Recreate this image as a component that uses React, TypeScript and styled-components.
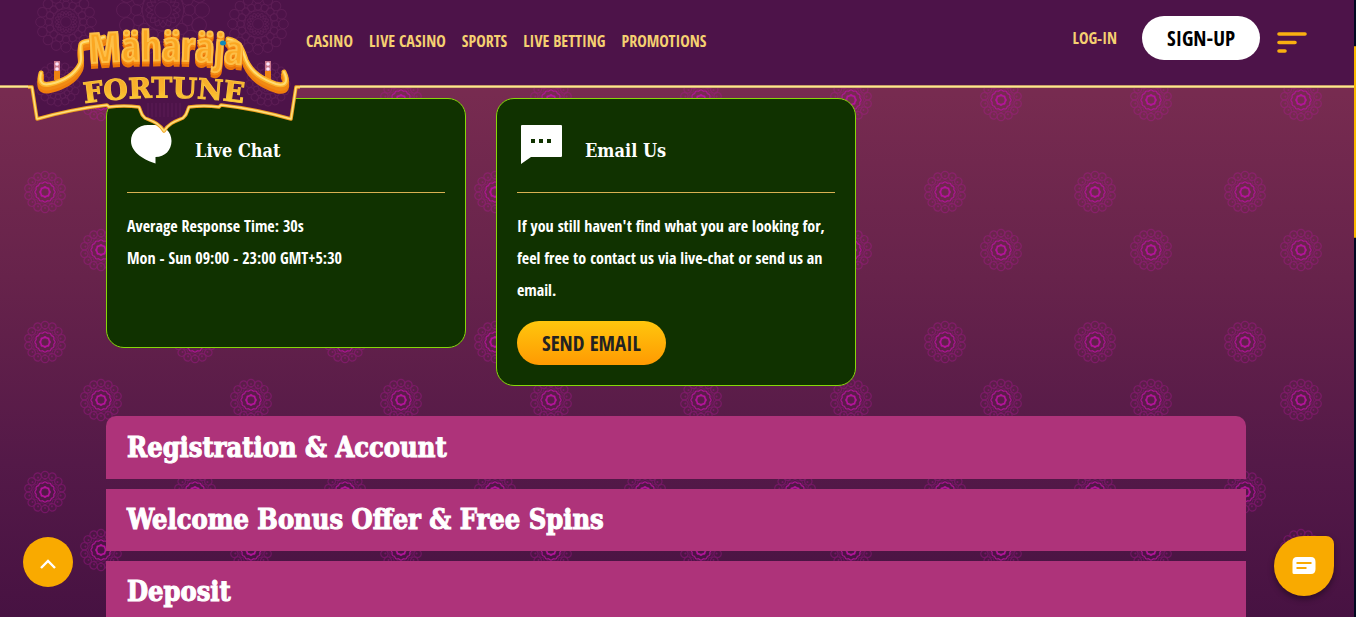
import React, { useState } from "react";
import styled, { createGlobalStyle } from "styled-components";

const narrow = `"Open Sans Condensed", "Liberation Sans Narrow", "Roboto Condensed", "Liberation Sans", sans-serif`;
const slab = `"DejaVu Serif Condensed", "DejaVu Serif", serif`;

const GlobalStyle = createGlobalStyle`
  * { box-sizing: border-box; }
  html, body, #root { height: 100%; }
  body { margin: 0; background: #4a1343; color: #fff; font-family: ${narrow}; }
`;

const Shell = styled.div`
  position: relative;
  display: flex;
  height: 100vh;
  overflow: hidden;
  background: linear-gradient(180deg, #7e2f51 0%, #772b50 15%, #67234b 45%, #541948 75%, #471242 100%);
`;

const Backdrop = styled.svg`
  position: absolute;
  inset: 0;
  width: 100%;
  height: 100%;
`;

const Scroller = styled.div`
  position: relative;
  flex: 1;
  min-width: 0;
  overflow-y: auto;
  scrollbar-width: none;
`;

const Rail = styled.div`
  position: relative;
  width: 2px;
  padding-top: 46px;
  background: #020922;
`;

const RailThumb = styled.div`
  height: 192px;
  border-radius: 1px;
  background: #f9b800;
`;

const Header = styled.header`
  position: sticky;
  top: 0;
  z-index: 5;
  display: flex;
  align-items: flex-start;
  height: 88px;
  background: linear-gradient(180deg, #4d1349 85px, #c79a6c 85px, #c79a6c 86px, #fbe88c 86px, #fbe88c 87px, #d8b878 87px);
`;

const LogoLink = styled.a`
  flex: none;
  width: 306px;
`;

const LogoArt = styled.svg`
  display: block;
  width: 306px;
  height: 140px;
`;

const LogoScript = styled.text`
  font: 700 41px ${narrow};
  fill: #fba722;
  stroke: #fdbf48;
  stroke-width: 2px;
  filter: drop-shadow(0 2px 0 #f58a12) drop-shadow(0 3px 0 #e9730a);
`;

const LogoSlab = styled.text`
  font: 700 28px "DejaVu Serif", serif;
  fill: url(#gold);
  stroke: #fbc33a;
  stroke-width: 1px;
`;

const Nav = styled.nav`
  display: flex;
  flex: 1;
  gap: 16px;
  height: 82px;
  align-items: center;
`;

const NavLink = styled.a`
  color: #f5d071;
  font-size: 16px;
  font-weight: 700;
  line-height: 24px;
  text-decoration: none;
  white-space: nowrap;
`;

const Account = styled.div`
  display: flex;
  align-items: center;
  height: 76px;
  padding-right: 47px;
`;

const SignUp = styled.button`
  height: 44px;
  margin: 0 17px 0 25px;
  padding: 0 25px;
  border: 0;
  border-radius: 22px;
  background: #fff;
  color: #000;
  font: 500 21px/44px ${narrow};
`;

const MenuButton = styled.button`
  display: flex;
  padding: 8px 0 0;
  border: 0;
  background: none;
`;

const Content = styled.div`
  padding: 10px 2px 30px 0;
`;

const Main = styled.main`
  max-width: 1140px;
  margin: 0 auto;
`;

const Cards = styled.div`
  display: flex;
  flex-wrap: wrap;
  align-items: flex-start;
  gap: 30px;
  margin-bottom: 30px;
`;

const Card = styled.section`
  width: 360px;
  min-height: 250px;
  padding: 20px;
  border: 1px solid #86d70a;
  border-radius: 18px;
  background: #103200;
`;

const CardHead = styled.header`
  display: flex;
  align-items: flex-start;
  gap: 20px;
  height: 74px;
  border-bottom: 1px solid #d9b152;
`;

const CardIcon = styled.svg`
  flex: none;
  width: 48px;
  height: 48px;
`;

const CardTitle = styled.h2`
  margin: 20px 0 0;
  font: 700 18px/24px ${slab};
`;

const CardText = styled.p`
  margin: 17px 0 15px;
  font-size: 16px;
  line-height: 32px;
`;

const SendButton = styled.button`
  display: block;
  height: 44px;
  padding: 0 25px;
  border: 0;
  border-radius: 22px;
  background: linear-gradient(180deg, #ffc60d, #ff9a02);
  color: #222;
  font: 700 21px/44px ${narrow};
`;

const Topics = styled.div`
  display: grid;
  gap: 10px;
`;

const TopicButton = styled.button`
  display: block;
  width: 100%;
  min-height: 62px;
  padding: 0 21px;
  border: 0;
  background: #ae337a;
  color: #fff;
  text-align: left;
  font: 700 27px/62px ${slab};
  -webkit-text-stroke: 1px #fff;
`;

const Topic = styled.h2`
  margin: 0;
  &:first-child > ${TopicButton} {
    min-height: 63px;
    border-radius: 10px 10px 0 0;
  }
`;

const ToTop = styled.button`
  position: absolute;
  left: 23px;
  bottom: 30px;
  z-index: 6;
  display: grid;
  place-items: center;
  width: 50px;
  height: 50px;
  padding: 0;
  border: 0;
  border-radius: 50%;
  background: #f9aa00;
`;

const ChatBubble = styled.button`
  position: absolute;
  right: 22px;
  bottom: 21px;
  z-index: 6;
  display: grid;
  place-items: center;
  width: 60px;
  height: 60px;
  padding: 0;
  border: 0;
  border-radius: 30px 8px 30px 30px;
  background: #f9aa00;
  box-shadow: 0 3px 6px rgba(0, 0, 0, 0.4);
`;

const ring = (n: number) => Array.from({ length: n }, (_, i) => (i * 360) / n);

function Flower({ x, y }: { x: number; y: number }) {
  return (
    <g transform={`translate(${x} ${y})`} fill="none" stroke="#b5129b">
      <g opacity="0.36">
        {ring(14).map((a) => (
          <g key={a} transform={`rotate(${a})`}>
            <circle cy="-17" r="3.7" strokeWidth="1.2" />
            <circle cy="-16" r="0.5" />
          </g>
        ))}
      </g>
      <g opacity="0.3">
        {ring(12).map((a) => (
          <path key={a} transform={`rotate(${a})`} d="M-3 -10.500Q0 -15 3 -10.500" strokeWidth="0.9" />
        ))}
      </g>
      <g opacity="0.9">
        {ring(12).map((a) => (
          <path key={a} transform={`rotate(${a})`} d="M-2.400 -8.600Q0 -11.600 2.400 -8.600" strokeWidth="1.2" />
        ))}
      </g>
      {ring(8).map((a) => (
        <path key={a} transform={`rotate(${a})`} d="M-1.500 -3.600Q0 -6.400 1.500 -3.600" strokeWidth="1.8" />
      ))}
    </g>
  );
}

function Mandala({ x, y, r }: { x: number; y: number; r: number }) {
  return (
    <g transform={`translate(${x} ${y})`}>
      {ring(16).map((a) => (
        <g key={a} transform={`rotate(${a})`}>
          <circle cy={-r * 0.85} r={r * 0.16} />
          <circle cy={-r * 0.58} r={r * 0.12} />
          <path d={`M${-r * 0.1} ${-r * 0.2}Q0 ${-r * 0.55} ${r * 0.1} ${-r * 0.2}`} />
        </g>
      ))}
      <circle r={r * 0.18} />
      <circle r={r * 0.45} />
    </g>
  );
}

const BANNER =
  "M28 87H32L37 119Q72 109 107 105L109 107Q124 105 139 107C141 110 140 114 145 118C152 121 159 123 164 131C169 123 176 121 183 118C188 114 187 110 189 107Q204 105 219 107L221 105Q256 109 291 119L296 87H300";

const SWASH = "M41 73C39 81 41 86 50 84C64 81 75 74 80 64C83 58 79 50 81 44C83 40 90 43 104 37";
const SWASH_RIGHT = "M228 39C241 41 243 52 246 60C252 73 262 79 276 84C287 87 288 80 284 72";

function Logo() {
  return (
    <LogoArt viewBox="0 0 306 140" role="img" aria-label="Maharaja Fortune">
      <defs>
        <linearGradient id="gold" x1="0" y1="0" x2="0" y2="1">
          <stop offset="0" stopColor="#f7a92a" />
          <stop offset="0.5" stopColor="#f9b32c" />
          <stop offset="1" stopColor="#ffe63c" />
        </linearGradient>
        <path id="scriptArc" d="M70 65Q165 55 262 67" />
        <path id="slabArc" d="M60 107Q164 88 268 107" />
      </defs>
      <path d={`${BANNER}V85H306V0H0V85H28Z`} fill="#4d1349" />
      <g fill="none" stroke="#8a3a78" strokeWidth="1" opacity="0.25">
        <Mandala x={66} y={22} r={30} />
        <Mandala x={163} y={10} r={46} />
        <Mandala x={258} y={24} r={30} />
        <Mandala x={58} y={84} r={22} />
        <Mandala x={268} y={84} r={22} />
        {ring(9).map((a) => (
          <path key={a} d={`M${148 + a / 10} 103v14`} />
        ))}
      </g>
      <path d={BANNER} fill="none" stroke="#f0a01e" strokeWidth="3.500" strokeLinejoin="round" />
      <path d={BANNER} fill="none" stroke="#fde07e" strokeWidth="1.600" strokeLinejoin="round" />
      {[57, 268].map((x) => (
        <g key={x}>
          <rect x={x - 3} y="68" width="6" height="12" fill="#f08312" />
          <rect x={x - 3} y="61" width="6" height="10" fill="#c9788c" />
          <circle cx={x} cy="64" r="1.800" fill="#fbe6ff" />
          <circle cx={x} cy="69" r="1.800" fill="#fbe6ff" />
        </g>
      ))}
      <g fill="none" strokeLinecap="round" strokeLinejoin="round">
        <g stroke="#ef7d0c" strokeWidth="6" transform="translate(0 6)">
          <path d={SWASH} />
          <path d={SWASH_RIGHT} />
        </g>
        <g stroke="#f08a14" strokeWidth="6" transform="translate(0 3)">
          <path d={SWASH} />
          <path d={SWASH_RIGHT} />
        </g>
        <g stroke="#fdb52a" strokeWidth="5">
          <path d={SWASH} />
          <path d={SWASH_RIGHT} />
        </g>
        <g stroke="#ffdc74" strokeWidth="2">
          <path d={SWASH} />
          <path d={SWASH_RIGHT} />
        </g>
      </g>
      <LogoScript textAnchor="middle">
        <textPath href="#scriptArc" startOffset="50%">Mähäräja</textPath>
      </LogoScript>
      <LogoSlab textAnchor="middle">
        <textPath href="#slabArc" startOffset="50%">FORTUNE</textPath>
      </LogoSlab>
      <ellipse cx="223" cy="43" rx="3" ry="2.500" fill="#1089b8" />
    </LogoArt>
  );
}

const NAV = ["CASINO", "LIVE CASINO", "SPORTS", "LIVE BETTING", "PROMOTIONS"];
const TOPICS = ["Registration & Account", "Welcome Bonus Offer & Free Spins", "Deposit"];

export default function App() {
  const [open, setOpen] = useState<string | null>(null);
  return (
    <>
      <GlobalStyle />
      <Shell>
        <Backdrop aria-hidden="true">
          <defs>
            <pattern id="flowers" width="150" height="150" patternUnits="userSpaceOnUse">
              <Flower x={45} y={42} />
              <Flower x={101} y={100} />
            </pattern>
          </defs>
          <rect width="100%" height="100%" fill="url(#flowers)" />
        </Backdrop>
        <Scroller>
          <Header>
            <LogoLink href="#home"><Logo /></LogoLink>
            <Nav aria-label="Main">
              {NAV.map((n) => <NavLink key={n} href="#">{n}</NavLink>)}
            </Nav>
            <Account>
              <NavLink href="#login">LOG-IN</NavLink>
              <SignUp type="button">SIGN-UP</SignUp>
              <MenuButton type="button" aria-label="Menu">
                <svg width="30" height="22" viewBox="0 0 30 22" stroke="#f9b010" strokeWidth="3.600" strokeLinecap="round">
                  <path d="M2 3H28M2 11.500H18M2 20H8" />
                </svg>
              </MenuButton>
            </Account>
          </Header>
          <Content>
            <Main>
              <Cards>
                <Card>
                  <CardHead>
                    <CardIcon viewBox="0 0 48 48" fill="#fff" aria-hidden="true">
                      <path d="M21 6H27C38 6 44.500 13 44.500 22C44.500 31 38 38 28.500 38V44.500C18 41 4 34 4 22C4 13 11 6 21 6Z" />
                    </CardIcon>
                    <CardTitle>Live Chat</CardTitle>
                  </CardHead>
                  <CardText>Average Response Time: 30s<br />Mon - Sun 09:00 - 23:00 GMT+5:30</CardText>
                </Card>
                <Card>
                  <CardHead>
                    <CardIcon viewBox="0 0 48 48" aria-hidden="true">
                      <path fill="#fff" d="M5 6H44Q45 6 45 7V37Q45 38 44 38H14L4 45V7Q4 6 5 6Z" />
                      <path fill="#103200" d="M14 20h4v4h-4zM22 20h4v4h-4zM30 20h4v4h-4z" />
                    </CardIcon>
                    <CardTitle>Email Us</CardTitle>
                  </CardHead>
                  <CardText>
                    If you still haven't find what you are looking for, feel free to contact us via live-chat or send us an email.
                  </CardText>
                  <SendButton type="button">SEND EMAIL</SendButton>
                </Card>
              </Cards>
              <Topics>
                {TOPICS.map((t) => (
                  <Topic key={t}>
                    <TopicButton type="button" aria-expanded={open === t} onClick={() => setOpen(open === t ? null : t)}>
                      {t}
                    </TopicButton>
                  </Topic>
                ))}
              </Topics>
            </Main>
          </Content>
        </Scroller>
        <Rail><RailThumb /></Rail>
        <ToTop type="button" aria-label="Back to top">
          <svg width="16" height="16" viewBox="0 0 16 16" fill="none" stroke="#fff" strokeWidth="2.400">
            <path d="M1 14L8 7L15 14" />
          </svg>
        </ToTop>
        <ChatBubble type="button" aria-label="Open chat">
          <svg width="24" height="18" viewBox="0 0 24 18">
            <path fill="#fff" d="M5 0H19Q23.500 0 23.500 5V12Q23.500 17 19 17H2Q0.500 17 0.500 15.500V5Q0.500 0 5 0Z" />
            <path stroke="#f9aa00" strokeWidth="2" d="M4.500 6H19.500M4.500 11H14.500" />
          </svg>
        </ChatBubble>
      </Shell>
    </>
  );
}
